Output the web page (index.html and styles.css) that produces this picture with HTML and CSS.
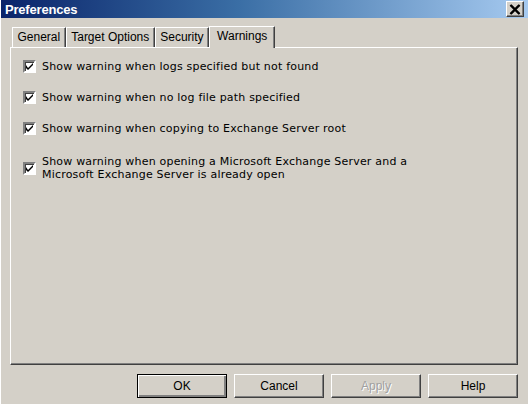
FILE: index.html
```html
<!DOCTYPE html>
<html lang="en">
<head>
    <meta charset="UTF-8">
    <title>Preferences</title>
    <link rel="stylesheet" href="styles.css">
</head>
<body>
    <div class="window">
        <div class="titlebar">
            <span class="title">Preferences</span>
            <span class="close-btn">
                <svg width="10" height="9" viewBox="0 0 10 9"><path d="M1 0.5 L9 8.5 M9 0.5 L1 8.5" stroke="#000" stroke-width="2"/></svg>
            </span>
        </div>

        <div class="content">
            <div class="tabs">
                <div class="tab">General</div>
                <div class="tab">Target Options</div>
                <div class="tab">Security</div>
                <div class="tab active">Warnings</div>
            </div>

            <div class="panel">
                <label class="option">
                    <span class="checkbox"><svg width="7" height="7" viewBox="0 0 7 7"><path d="M0 2 L0 5 L2 7 L7 2 L7 0 L2 5 Z" fill="#000"/></svg></span>
                    <span class="option-text">Show warning when logs specified but not found</span>
                </label>
                <label class="option">
                    <span class="checkbox"><svg width="7" height="7" viewBox="0 0 7 7"><path d="M0 2 L0 5 L2 7 L7 2 L7 0 L2 5 Z" fill="#000"/></svg></span>
                    <span class="option-text">Show warning when no log file path specified</span>
                </label>
                <label class="option">
                    <span class="checkbox"><svg width="7" height="7" viewBox="0 0 7 7"><path d="M0 2 L0 5 L2 7 L7 2 L7 0 L2 5 Z" fill="#000"/></svg></span>
                    <span class="option-text">Show warning when copying to Exchange Server root</span>
                </label>
                <label class="option two-line">
                    <span class="checkbox"><svg width="7" height="7" viewBox="0 0 7 7"><path d="M0 2 L0 5 L2 7 L7 2 L7 0 L2 5 Z" fill="#000"/></svg></span>
                    <span class="option-text">Show warning when opening a Microsoft Exchange Server and a<br>Microsoft Exchange Server is already open</span>
                </label>
            </div>

            <div class="buttons">
                <div class="btn default">OK</div>
                <div class="btn">Cancel</div>
                <div class="btn disabled">Apply</div>
                <div class="btn">Help</div>
            </div>
        </div>
    </div>
</body>
</html>
```

FILE: styles.css
```css
/* === base === */
html, body {
    margin: 0;
    width: 528px;
    height: 404px;
    overflow: hidden;
    background: #d4d0c8;
    font-family: "Liberation Sans", Arial, sans-serif;
}

.window {
    height: 404px;
    border-left: 1px solid #ffffff;
    box-sizing: border-box;
}

/* === title bar === */
.titlebar {
    height: 18px;
    display: flex;
    align-items: center;
    justify-content: space-between;
    padding: 0 4px 0 4px;
    background: linear-gradient(to right, #0a246a 0%, #3a6ea5 45%, #a6caf0 100%);
}

.title {
    color: #ffffff;
    font-weight: bold;
    font-size: 13px;
    letter-spacing: -0.2px;
}

.close-btn {
    width: 16px;
    height: 14px;
    display: flex;
    align-items: center;
    justify-content: center;
    background: #d4d0c8;
    border-top: 1px solid #ffffff;
    border-left: 1px solid #ffffff;
    border-right: 1px solid #404040;
    border-bottom: 1px solid #404040;
    box-shadow: inset -1px -1px 0 #808080;
}

.close-btn svg {
    transform: scale(1.15);
}

.content {
    padding: 7px 10px 0 9px;
}

/* === tabs === */
.tabs {
    display: flex;
    align-items: flex-end;
    height: 22px;
    padding-left: 2px;
}

.tab {
    height: 19px;
    line-height: 19px;
    padding: 0 4.5px;
    font-size: 12px;
    color: #000;
    border-top: 1px solid #ffffff;
    border-left: 1px solid #ffffff;
    border-right: 1px solid #404040;
    box-shadow: inset -1px 0 0 #808080;
}

.tab.active {
    height: 21px;
    line-height: 19px;
    padding: 0 7px;
    margin-bottom: -1px;
    background: #d4d0c8;
    position: relative;
    z-index: 1;
}

/* === panel === */
.panel {
    height: 318px;
    box-sizing: border-box;
    border-top: 1px solid #ffffff;
    border-left: 1px solid #ffffff;
    border-right: 1px solid #404040;
    border-bottom: 1px solid #404040;
    box-shadow: inset -1px -1px 0 #808080;
    padding: 12px 0 0 12px;
    display: flex;
    flex-direction: column;
    gap: 18px;
}

.option {
    display: flex;
    align-items: center;
    gap: 6px;
    font-family: "DejaVu Sans", Verdana, sans-serif;
    font-size: 11px;
    letter-spacing: 0.2px;
    line-height: 13px;
    color: #000;
}

.option.two-line {
    margin-top: 2px;
}

.checkbox {
    flex: none;
    width: 9px;
    height: 9px;
    display: flex;
    align-items: center;
    justify-content: center;
    background: #ffffff;
    border-top: 2px solid #808080;
    border-left: 2px solid #808080;
    border-right: 2px solid #ffffff;
    border-bottom: 2px solid #ffffff;
    box-shadow: inset 1px 1px 0 #404040;
}

/* === buttons === */
.buttons {
    display: flex;
    justify-content: flex-end;
    gap: 7px;
    padding-top: 9px;
}

.btn {
    width: 90px;
    height: 24px;
    box-sizing: border-box;
    display: flex;
    align-items: center;
    justify-content: center;
    font-size: 12px;
    color: #000;
    border-top: 1px solid #ffffff;
    border-left: 1px solid #ffffff;
    border-right: 1px solid #404040;
    border-bottom: 1px solid #404040;
    box-shadow: inset -1px -1px 0 #808080;
}

.btn.default {
    border: 1px solid #000;
    box-shadow: inset 1px 1px 0 #ffffff, inset -2px -2px 0 #808080;
}

.btn.disabled {
    color: #a0a0a0;
    text-shadow: 1px 1px 0 #ffffff;
}
```
